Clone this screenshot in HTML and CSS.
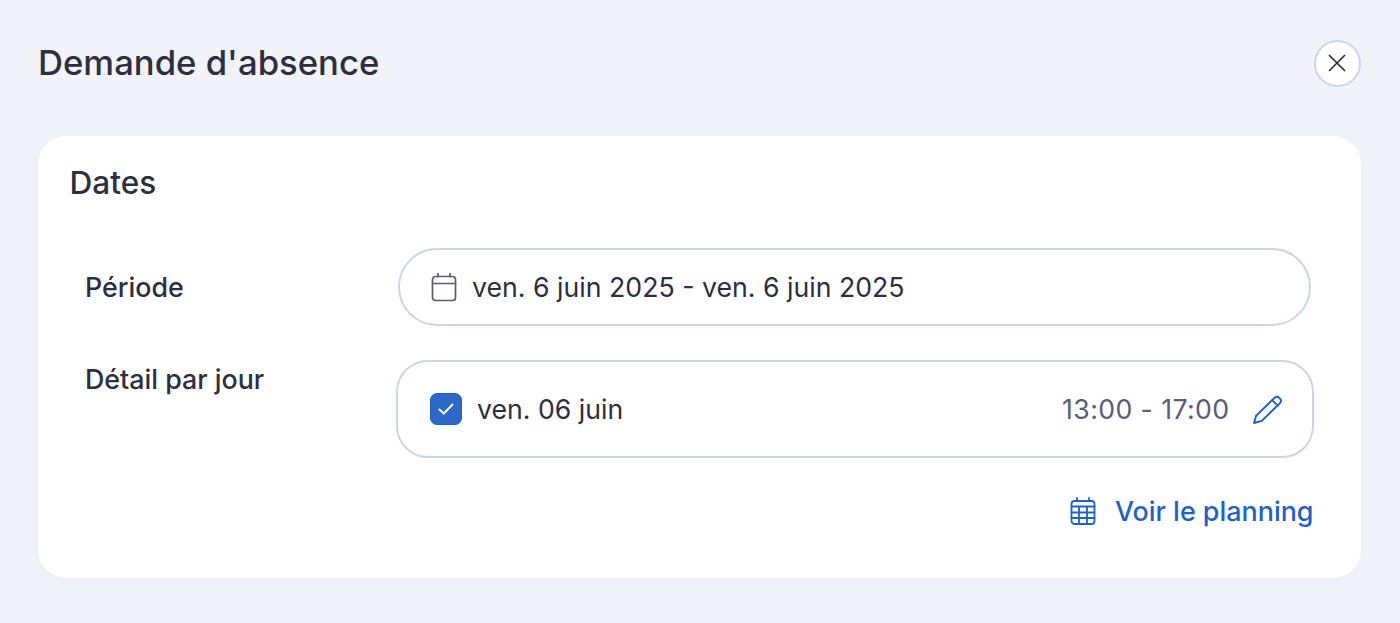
FILE: index.html
```html
<!DOCTYPE html>
<html lang="fr">
<head>
<meta charset="utf-8">
<title>Demande d'absence</title>
<link rel="stylesheet" href="styles.css">
</head>
<body>
<div class="page">
  <header class="header">
    <h1 class="title">Demande d'absence</h1>
    <button class="close" aria-label="Fermer">
      <svg width="18" height="18" viewBox="0 0 18 18" fill="none" stroke="#23233a" stroke-width="1.6"><path d="M1 1L17 17M17 1L1 17"/></svg>
    </button>
  </header>
  <section class="card">
    <h2 class="card-title">Dates</h2>
    <div class="row row-period">
      <div class="label">Période</div>
      <div class="field">
        <svg class="ico-cal" width="26" height="30" viewBox="0 0 26 30" fill="none" stroke="#5a5c78" stroke-width="1.7" stroke-linecap="round" stroke-linejoin="round"><rect x="1.5" y="4.5" width="23" height="24" rx="3"/><path d="M1.5 11.5H24.5M7 1.5V4.5M19 1.5V4.5"/></svg>
        <span class="field-text">ven. 6 juin 2025 - ven. 6 juin 2025</span>
      </div>
    </div>
    <div class="row row-detail">
      <div class="label label-detail">Détail par jour</div>
      <div class="day">
        <span class="check"><svg width="16" height="12" viewBox="0 0 16 12" fill="none" stroke="#fff" stroke-width="2" stroke-linecap="round" stroke-linejoin="round"><path d="M1.5 6.5L5.8 10.5L14.5 1.5"/></svg></span>
        <span class="day-name">ven. 06 juin</span>
        <span class="hours">13:00 - 17:00</span>
        <svg class="ico-pen" width="29" height="29" viewBox="0 0 28 28" fill="none" stroke="#1f62c4" stroke-width="1.9" stroke-linecap="round" stroke-linejoin="round"><path d="M1 27L3 20L21 2.5Q23 0.8 25 2.5L26.5 4Q27.8 6 26 7.8L8.5 25Z"/><path d="M18.5 5L24 10.5"/></svg>
      </div>
    </div>
    <div class="link-row">
      <a class="link">
        <svg width="26" height="28" viewBox="0 0 26 28" fill="none" stroke="#1f62c4" stroke-width="1.8" stroke-linecap="round" stroke-linejoin="round"><rect x="1.5" y="4" width="23" height="23" rx="3"/><path d="M1.5 9.5H24.5M1.5 15.5H24.5M1.5 21H24.5M9 9.5V27M17 9.5V27M7 1V4M19 1V4"/></svg>
        <span>Voir le planning</span>
      </a>
    </div>
  </section>
</div>
</body>
</html>
```
FILE: styles.css
```css
* { box-sizing: border-box; }
html, body { margin: 0; height: 100%; }
body { background: #f2f3f8; font-family: Inter, "Liberation Sans", sans-serif; color: #2d2e40; }
.page { padding: 39px 39.5px 0 38px; }
.header { display: flex; justify-content: space-between; align-items: center; height: 48px; margin-bottom: 49px; }
.title { margin: 0; padding-bottom: 2px; font-size: 34.67px; font-weight: 500; color: #2d2e40; }
.close { width: 47px; height: 47px; border-radius: 50%; border: 2px solid #cdd4ea; background: #fff; padding: 0; display: flex; align-items: center; justify-content: center; }
.card { background: #fff; border-radius: 28px; height: 442px; padding: 28px 47px 0 31.5px; box-shadow: 0 2px 12px rgba(40,50,90,.03); }
.card-title { margin: 0 0 46px; font-size: 31.6px; line-height: 38px; font-weight: 500; color: #2d2e40; }
.row { display: flex; }
.row-period { align-items: center; padding-left: 15.5px; }
.label { width: 313px; flex: none; font-size: 26.8px; font-weight: 500; color: #2d2e40; }
.field { flex: 1; height: 78px; border: 2px solid #cdd4ea; border-radius: 39px; display: flex; align-items: center; padding-left: 31px; margin-right: 2.5px; }
.field-text { margin-left: 15px; font-size: 26.7px; color: #2d2e40; }
.ico-cal { flex: none; }
.row-detail { margin-top: 34px; padding-left: 15.5px; }
.label-detail { width: 311px; line-height: 38px; }
.day { flex: 1; height: 98px; border: 2px solid #cdd4ea; border-radius: 32px; display: flex; align-items: center; padding: 0 30px 0 32px; }
.check { width: 31.5px; height: 32px; border-radius: 7px; background: #2d68c6; border: 1px solid #1f62c4; display: flex; align-items: center; justify-content: center; flex: none; }
.day-name { margin-left: 15.5px; font-size: 26.67px; color: #2d2e40; }
.hours { margin-left: auto; font-size: 26.67px; letter-spacing: 0.4px; color: #5a5c78; }
.ico-pen { margin-left: 23px; flex: none; }
.link-row { display: flex; justify-content: flex-end; margin-top: 36px; }
.link { display: flex; align-items: center; gap: 19px; font-size: 26.9px; font-weight: 500; color: #1f62c4; line-height: 34px; }
```
